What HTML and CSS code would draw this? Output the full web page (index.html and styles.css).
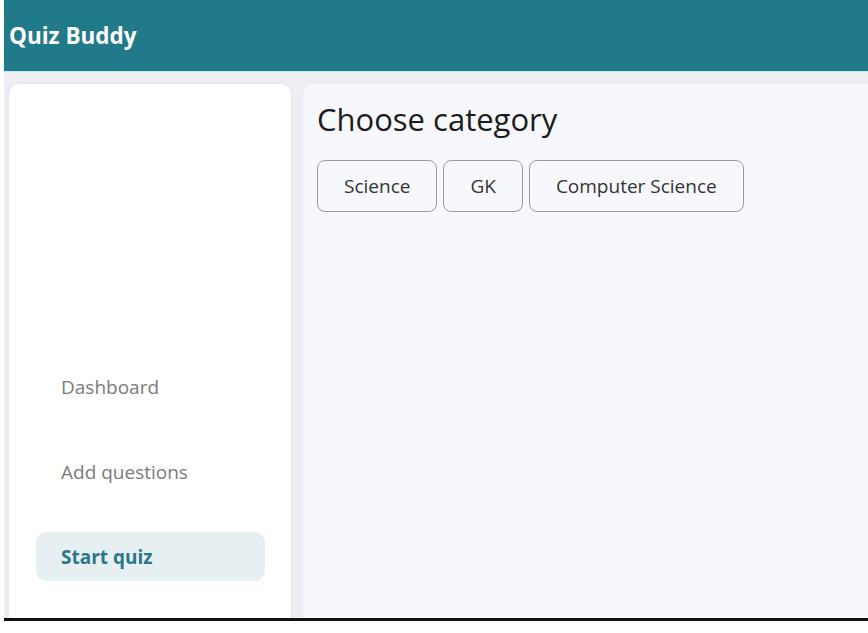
FILE: index.html
```html
<!DOCTYPE html>
<html lang="en">
<head>
<meta charset="utf-8">
<title>Quiz Buddy</title>
<link rel="stylesheet" href="styles.css">
</head>
<body>
<div class="frame">
  <header class="topbar">
    <span class="brand">Quiz Buddy</span>
  </header>
  <div class="content">
    <aside class="sidebar">
      <nav class="nav">
        <a class="nav-item">Dashboard</a>
        <a class="nav-item">Add questions</a>
        <a class="nav-item active">Start quiz</a>
      </nav>
    </aside>
    <main class="main">
      <h1 class="title">Choose category</h1>
      <div class="categories">
        <button class="cat">Science</button>
        <button class="cat">GK</button>
        <button class="cat">Computer Science</button>
      </div>
    </main>
  </div>
</div>
</body>
</html>
```

FILE: styles.css
```css
html, body {
  margin: 0;
  padding: 0;
  background: #ffffff;
}

body {
  font-family: "Open Sans", "Noto Sans", sans-serif;
}

.frame {
  margin-left: 4px;
  width: 864px;
  height: 618px;
  display: flex;
  flex-direction: column;
  background: #ededf3;
  border-bottom: 3px solid #111111;
  overflow: hidden;
}

.topbar {
  height: 71px;
  flex: none;
  background: #217a8a;
  border-bottom: 1px solid #b9eef3;
  display: flex;
  align-items: center;
  padding-left: 5px;
}

.brand {
  color: #ffffff;
  font-weight: 700;
  font-size: 22.5px;
}

.content {
  flex: 1;
  display: flex;
  gap: 12px;
  padding: 12px 0 0 5px;
  min-height: 0;
}

.sidebar {
  width: 282px;
  flex: none;
  background: #ffffff;
  border-radius: 10px 10px 0 0;
  box-shadow: 0 0 4px rgba(0, 0, 0, 0.06);
  display: flex;
  flex-direction: column;
  justify-content: flex-end;
  padding: 0 26px 37px 27px;
  box-sizing: border-box;
}

.nav {
  display: flex;
  flex-direction: column;
  gap: 36px;
}

.nav-item {
  height: 49px;
  display: flex;
  align-items: center;
  padding-left: 25px;
  border-radius: 10px;
  color: #7b7b7b;
  font-size: 19px;
}

.nav-item.active {
  background: #e6f0f3;
  color: #2b7787;
  font-weight: 700;
}

.main {
  flex: 1;
  background: #f7f8fc;
  border-radius: 10px 0 0 0;
  padding: 13px 14px;
}

.title {
  margin: 0;
  font-weight: 400;
  font-size: 31px;
  line-height: 44px;
  color: #1c1c1c;
}

.categories {
  display: flex;
  gap: 6px;
  margin-top: 19px;
}

.cat {
  height: 52px;
  padding: 0 26px;
  background: #f7f8fc;
  border: 1px solid #9a9a9a;
  border-radius: 8px;
  font-family: "Open Sans", "Noto Sans", sans-serif;
  font-size: 19px;
  color: #333333;
}
```
